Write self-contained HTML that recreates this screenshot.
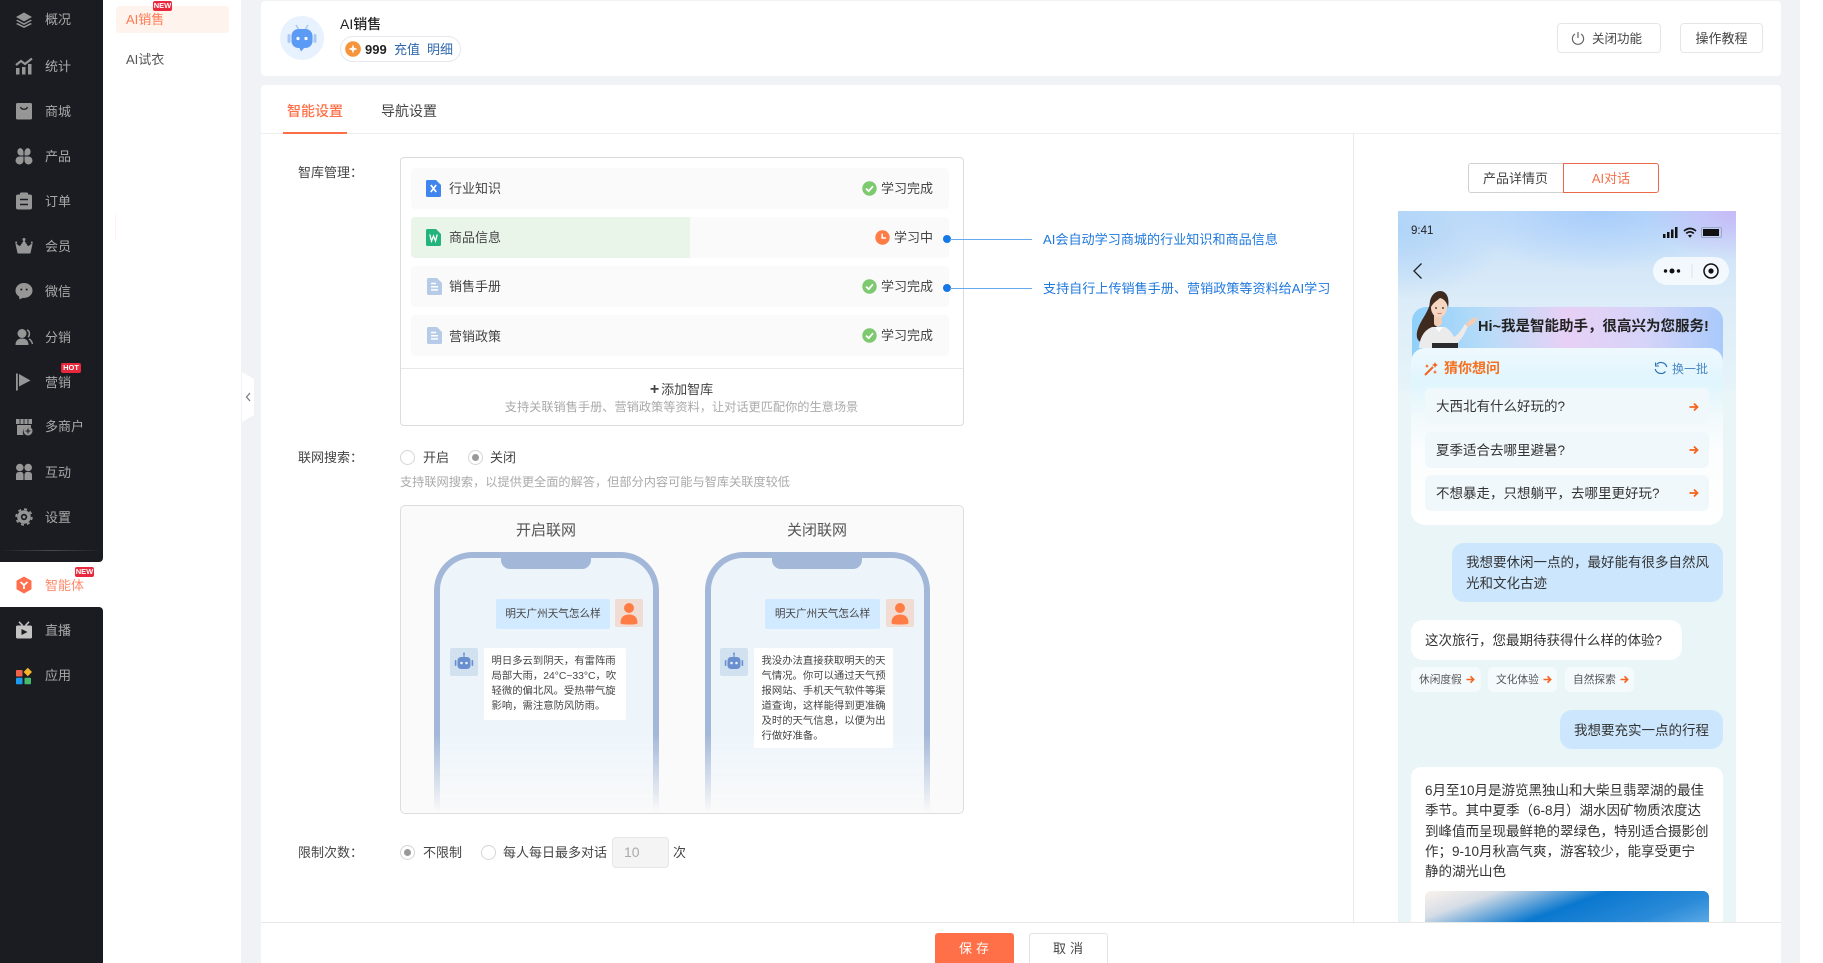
<!DOCTYPE html>
<html lang="zh-CN"><head><meta charset="utf-8"><title>AI销售</title>
<style>
*{box-sizing:border-box;margin:0;padding:0}
html,body{width:1823px;height:963px;overflow:hidden;background:#fff}
body{position:relative;font-family:"Liberation Sans","Noto Sans CJK SC",sans-serif;font-size:13px;color:#333}
.a,.t,svg.a{position:absolute}
.t{white-space:nowrap;line-height:20px;height:20px;margin-top:1px}
.nav{color:#a9a9a9;left:45px}
.ic{position:absolute;left:14.5px;width:18px;height:18px;margin-top:-.5px;fill:#969696}
.badge{position:absolute;background:#e8283c;color:#fff;font-size:7.500px;font-weight:bold;line-height:10px;height:10px;text-align:center;border-radius:2px;font-family:"Liberation Sans",sans-serif}
.row{position:absolute;left:411px;width:538px;height:41px;background:#fafafa;border-radius:4px;overflow:hidden}
.radio{position:absolute;width:15px;height:15px;border:1px solid #d5d5d5;border-radius:50%;background:#fff}
.radio.on:after{content:"";position:absolute;left:3px;top:3px;width:7px;height:7px;border-radius:50%;background:#999}
.phone{position:absolute;top:552px;width:225px;height:260px;border:6px solid #a3b7d8;border-bottom:0;border-radius:38px 38px 0 0;background:#edf5fb;-webkit-mask-image:linear-gradient(to bottom,#000 70%,transparent 100%);mask-image:linear-gradient(to bottom,#000 70%,transparent 100%)}
.notch{position:absolute;top:552px;width:90px;height:17px;background:#a3b7d8;border-radius:0 0 9px 9px}
.q{position:absolute;background:#d2eaff;top:599px;height:30px;line-height:30px;text-align:center;font-size:10.6px;color:#444;border-radius:2px;white-space:nowrap}
.av{position:absolute;top:599px;width:28px;height:28px;background:#f1dcd3;border-radius:2px}
.bot{position:absolute;top:648px;width:28px;height:28px;background:#d2e1f0;border-radius:2px}
.ans{position:absolute;top:648px;background:#fff;border-radius:2px;font-size:10.35px;line-height:15px;color:#444;padding:5.5px 0 0 7.5px;white-space:nowrap}
.qq{position:absolute;left:1425px;width:284px;height:36px;line-height:38px;padding-left:11px;background:#f1f8fb;border-radius:6px;font-size:13.5px;color:#333;white-space:nowrap}
.chip{position:absolute;top:667px;height:25px;line-height:27px;background:#f5fbfd;border-radius:6px;font-size:10.7px;color:#555;padding-left:8px;white-space:nowrap}
.bub{position:absolute;border-radius:12px;font-size:13.5px;color:#333;white-space:nowrap}
.btn{position:absolute;border:1px solid #e6e6e6;border-radius:4px;background:#fff;text-align:center;color:#444;white-space:nowrap}
</style></head><body>
<svg width="0" height="0" style="position:absolute">
<symbol id="ok" viewBox="0 0 15 15"><circle cx="7.5" cy="7.5" r="7.2" fill="#7cc96f"/><path d="M4 7.6 6.7 10.2 11 5.2" fill="none" stroke="#fff" stroke-width="1.8"/></symbol>
<symbol id="doc" viewBox="0 0 15 17"><path d="M1.5 0H10L15 5V15.500A1.500 1.500 0 0 1 13.500 17H1.500A1.500 1.500 0 0 1 0 15.500V1.500A1.500 1.500 0 0 1 1.500 0Z" fill="#b6cbe8"/><path d="M4 5.500H9M4 8.700H11M4 11.900H11" stroke="#fff" stroke-width="1.500"/></symbol>
<symbol id="arr" viewBox="0 0 10 10"><path d="M0.500 5H8M5 1.500 8.500 5 5 8.500" fill="none" stroke="#f5641e" stroke-width="1.800"/></symbol>
<symbol id="robot" viewBox="0 0 28 28"><path d="M14 5.500V9" stroke="#6a8fcf" stroke-width="1.200"/><circle cx="14" cy="5.500" r="1" fill="#6a8fcf"/><rect x="7.500" y="9" width="13" height="12" rx="3.500" fill="#6a8fcf"/><rect x="4.800" y="12" width="1.600" height="6" rx=".8" fill="#6a8fcf"/><rect x="21.600" y="12" width="1.600" height="6" rx=".8" fill="#6a8fcf"/><circle cx="11.500" cy="15" r="1.300" fill="#e6eef8"/><circle cx="16.500" cy="15" r="1.300" fill="#e6eef8"/></symbol>
<symbol id="person" viewBox="0 0 28 28"><circle cx="14" cy="9" r="5" fill="#ff7d45"/><path d="M5.500 24C5.500 18 9 15.500 14 15.500S22.500 18 22.500 24C22.500 25 21 25.500 14 25.500S5.500 25 5.500 24Z" fill="#ff7d45"/></symbol>
</svg>

<!-- main gray bg -->
<div class="a" style="left:241px;top:0;width:1559px;height:963px;background:#f1f2f6"></div>
<!-- primary nav -->
<div class="a" style="left:0;top:0;width:103px;height:562px;background:#1a1c22;border-radius:0 0 4px 0"></div>
<div class="a" style="left:0;top:607px;width:103px;height:356px;background:#1a1c22;border-radius:0 4px 0 0"></div>
<div class="a" style="left:0;top:550px;width:103px;height:1px;background:linear-gradient(90deg,#1a1c22,#4a4a4d 50%,#1a1c22)"></div>
<!-- secondary nav -->
<div class="a" style="left:103px;top:0;width:138px;height:963px;background:#fff"></div>
<div class="a" style="left:115px;top:213px;width:1px;height:27px;background:#fdf3ef"></div>

<svg class="ic" style="top:11px" viewBox="0 0 18 18"><path d="M9 1.500 17 6 9 10.500 1 6Z"/><path d="M2.500 8.700 9 12.300 15.500 8.700 17 9.500 9 14 1 9.500Z"/><path d="M2.500 12 9 15.300 15.500 12 17 13 9 17 1 13Z"/></svg>
<div class="t nav" style="top:9px">概况</div>
<svg class="ic" style="top:57px" viewBox="0 0 18 18"><path d="M1 8 6 4 10 7 17 1.500" fill="none" stroke="#969696" stroke-width="2.200"/><rect x="1" y="11" width="3.500" height="6.500"/><rect x="7" y="10" width="3.500" height="7.500"/><rect x="13" y="7" width="3.500" height="10.500"/></svg>
<div class="t nav" style="top:56px">统计</div>
<svg class="ic" style="top:102px" viewBox="0 0 18 18"><path d="M2.500 1H15.500A1.500 1.500 0 0 1 17 2.500V16A1.500 1.500 0 0 1 15.500 17.500H2.500A1.500 1.500 0 0 1 1 16V2.500A1.500 1.500 0 0 1 2.500 1Z"/><path d="M5.500 5C6.500 8 11.500 8 12.500 5" fill="none" stroke="#1a1c22" stroke-width="1.200"/></svg>
<div class="t nav" style="top:101px">商城</div>
<svg class="ic" style="top:147px" viewBox="0 0 18 18"><path d="M5 1A4 4 0 0 1 8.500 5V8.500H5A4 4 0 0 1 5 1Z"/><path d="M13 1A4 4 0 0 1 13 8.500H9.500V5A4 4 0 0 1 13 1Z"/><path d="M5 9.500H8.500V13A4 4 0 1 1 5 9.500Z"/><path d="M9.500 9.500H13A4 4 0 1 1 9.500 13Z"/></svg>
<div class="t nav" style="top:146px">产品</div>
<svg class="ic" style="top:192px" viewBox="0 0 18 18"><rect x="1" y="2.500" width="16" height="15" rx="2"/><rect x="5" y="0.500" width="8" height="3" rx="1"/><path d="M5 7.500H13M5 12.500H13" stroke="#1a1c22" stroke-width="1.500"/></svg>
<div class="t nav" style="top:191px">订单</div>
<svg class="ic" style="top:237px" viewBox="0 0 18 18"><path d="M1 7 5 10 9 4 13 10 17 7 15 16H3Z" stroke="#969696" stroke-linejoin="round"/><circle cx="9" cy="2.500" r="1.500"/><circle cx="1.200" cy="5.500" r="1"/><circle cx="16.800" cy="5.500" r="1"/></svg>
<div class="t nav" style="top:236px">会员</div>
<svg class="ic" style="top:282px" viewBox="0 0 18 18"><ellipse cx="9" cy="8.500" rx="8.500" ry="7.500"/><path d="M4 13.500 4.500 17.500 8.500 15.500Z"/><circle cx="6.300" cy="7.500" r="1" fill="#1a1c22"/><circle cx="11.700" cy="7.500" r="1" fill="#1a1c22"/></svg>
<div class="t nav" style="top:281px">微信</div>
<svg class="ic" style="top:328px" viewBox="0 0 18 18"><circle cx="7" cy="5.500" r="4.500"/><path d="M0.500 17C0.500 12.500 3 10.500 7 10.500S13.500 12.500 13.500 17Z"/><path d="M12 2C15 3 15 7.500 13 9M14 11C16 12 17 14 17.500 16" fill="none" stroke="#969696" stroke-width="1.500"/></svg>
<div class="t nav" style="top:327px">分销</div>
<svg class="ic" style="top:373px" viewBox="0 0 18 18"><rect x="1" y="0.500" width="1.800" height="17"/><path d="M4 1 15.500 7.500 4 13.500Z"/></svg>
<div class="t nav" style="top:372px">营销</div>
<div class="badge" style="left:61px;top:363px;width:20px">HOT</div>
<svg class="ic" style="top:418px" viewBox="0 0 18 18"><path d="M1 1H17V6H1Z"/><path d="M2 7H16V9.500A5.500 5.500 0 0 0 8.500 17H2Z"/><path d="M5 1V6M9 1V6M13 1V6" stroke="#1a1c22" stroke-width=".8"/><circle cx="13" cy="13" r="4.500"/><path d="M13 10.500V15.500M10.500 13H15.500" stroke="#1a1c22" stroke-width="1.100"/></svg>
<div class="t nav" style="top:416px">多商户</div>
<svg class="ic" style="top:463px" viewBox="0 0 18 18"><circle cx="4.800" cy="4.500" r="3.800"/><circle cx="13.200" cy="4.500" r="3.800"/><path d="M1 17V12Q1 9 4 9H7L8.500 11V17ZM9.500 11 11 9H14Q17 9 17 12V17H9.500Z"/></svg>
<div class="t nav" style="top:462px">互动</div>
<svg class="ic" style="top:508px" viewBox="0 0 18 18"><circle cx="9" cy="9" r="6.800"/><circle cx="9" cy="9" r="7.800" fill="none" stroke="#969696" stroke-width="1.800" stroke-dasharray="3 3.100"/><circle cx="9" cy="9" r="3.200" fill="#1a1c22"/><circle cx="9" cy="9" r="1.500" fill="#969696"/></svg>
<div class="t nav" style="top:507px">设置</div>

<svg class="ic" style="top:576px" viewBox="0 0 18 18"><path d="M9 .5 16.500 4.700V13.300L9 17.500 1.500 13.300V4.700Z" fill="#ff6f4d"/><path d="M5.500 6 9 9 12.500 6M9 9V13" fill="none" stroke="#fff" stroke-width="1.800"/></svg>
<div class="t nav" style="top:575px;color:#ff8a6b">智能体</div>
<div class="badge" style="left:75px;top:567px;width:19px">NEW</div>
<svg class="ic" style="top:621px" viewBox="0 0 18 18"><rect x="1" y="4.500" width="16" height="13" rx="1.500" fill="#c4c4c4"/><path d="M4 .8 7.500 4.500M14 .8 10.500 4.500" stroke="#c4c4c4" stroke-width="1.500"/><path d="M6.500 8 12.500 11 6.500 14Z" fill="#1a1c22"/></svg>
<div class="t nav" style="top:620px">直播</div>
<svg class="ic" style="top:667px" viewBox="0 0 18 18"><rect x="1" y="3" width="6.500" height="6.500" rx=".8" fill="#f0614a"/><path d="M12.800 .8 17 5 12.800 9.200 8.600 5Z" fill="#f9b52a"/><rect x="1" y="10.800" width="6.500" height="6.500" rx=".8" fill="#1b9bf0"/><rect x="9.500" y="10.800" width="6.500" height="6.500" rx=".8" fill="#46bb6c"/></svg>
<div class="t nav" style="top:665px">应用</div>

<!-- sub menu -->
<div class="a" style="left:116px;top:6px;width:113px;height:27px;background:#fff3ee;border-radius:3px"></div>
<div class="t" style="left:126px;top:9px;color:#ff7a50">AI销售</div>
<div class="badge" style="left:153px;top:1px;width:19px">NEW</div>
<div class="t" style="left:126px;top:49px;color:#555">AI试衣</div>
<!-- collapse handle -->
<svg class="a" style="left:242px;top:372px" width="13" height="50" viewBox="0 0 13 50"><path d="M0 0 12 7V43L0 50Z" fill="#fff"/><path d="M8 21 4.500 25 8 29" fill="none" stroke="#777" stroke-width="1.200"/></svg>

<!-- header card -->
<div class="a" style="left:261px;top:1px;width:1520px;height:75px;background:#fff;border-radius:4px"></div>
<svg class="a" style="left:280px;top:16px" width="44" height="44" viewBox="0 0 44 44"><circle cx="22" cy="22" r="22" fill="#e8f2fe"/><path d="M16 9 18.500 13M28 9 25.500 13" stroke="#a9c8f5" stroke-width="1.500"/><rect x="7.500" y="18" width="3" height="9" rx="1.500" fill="#a9c8f5"/><rect x="33.500" y="18" width="3" height="9" rx="1.500" fill="#a9c8f5"/><rect x="11.500" y="13" width="21" height="19" rx="7" fill="#5b9bf5"/><path d="M19 31 21 35.500 25 31Z" fill="#5b9bf5"/><circle cx="18" cy="22.500" r="1.600" fill="#fff"/><circle cx="26" cy="22.500" r="1.600" fill="#fff"/></svg>
<div class="t" style="left:340px;top:13px;font-size:14px;font-weight:500;color:#222">AI销售</div>
<div class="a" style="left:340px;top:36px;width:121px;height:26px;border:1px solid #e6e8ee;border-radius:13px;background:#fff"></div>
<svg class="a" style="left:345px;top:41px" width="16" height="16" viewBox="0 0 16 16"><circle cx="8" cy="8" r="7.800" fill="#f5943a"/><path d="M8 3.500 9.200 6.800 12.500 8 9.200 9.200 8 12.500 6.800 9.200 3.500 8 6.800 6.800Z" fill="#fff"/></svg>
<div class="t" style="left:365px;top:39px;font-weight:bold;color:#222">999</div>
<div class="t" style="left:394px;top:39px;color:#2f67ad">充值</div>
<div class="t" style="left:427px;top:39px;color:#2f67ad">明细</div>
<div class="btn" style="left:1557px;top:23px;width:104px;height:30px;line-height:30px;padding-left:16px;font-size:12.500px;border-width:1.500px">关闭功能</div>
<svg class="a" style="left:1571px;top:31px" width="14" height="15" viewBox="0 0 14 15"><path d="M7 1V7" stroke="#666" stroke-width="1.200"/><path d="M4 3A5.600 5.600 0 1 0 10 3" fill="none" stroke="#666" stroke-width="1.200"/></svg>
<div class="btn" style="left:1680px;top:23px;width:83px;height:30px;line-height:30px;font-size:13px;border-width:1.500px">操作教程</div>

<!-- content card -->
<div class="a" style="left:261px;top:85px;width:1520px;height:878px;background:#fff;border-radius:4px 4px 0 0"></div>
<div class="a" style="left:261px;top:133px;width:1520px;height:1px;background:#eee"></div>
<div class="t" style="left:287px;top:100px;font-size:14px;color:#ff7048;font-weight:500">智能设置</div>
<div class="a" style="left:283px;top:132px;width:64px;height:2px;background:#ff7048"></div>
<div class="t" style="left:381px;top:100px;font-size:14px;color:#444">导航设置</div>
<div class="a" style="left:1353px;top:134px;width:1px;height:788px;background:#eaeaea"></div>

<!-- 智库 -->
<div class="t" style="left:298px;top:162px;color:#444">智库管理：</div>
<div class="a" style="left:400px;top:157px;width:564px;height:269px;border:1px solid #dcdcdc;border-radius:4px;background:#fff"></div>
<div class="row" style="top:168px"></div>
<div class="row" style="top:217px"><div class="a" style="left:0;top:0;width:279px;height:41px;background:#eaf5ea"></div></div>
<div class="row" style="top:266px"></div>
<div class="row" style="top:315px"></div>

<svg class="a" style="left:426px;top:180px" width="15" height="17" viewBox="0 0 15 17"><path d="M1.500 0H10L15 5V15.500A1.500 1.500 0 0 1 13.500 17H1.500A1.500 1.500 0 0 1 0 15.500V1.500A1.500 1.500 0 0 1 1.500 0Z" fill="#3f84ef"/><path d="M4.800 5 10.200 12M10.200 5 4.800 12" stroke="#fff" stroke-width="1.700"/></svg>
<div class="t" style="left:449px;top:178px;color:#444">行业知识</div>
<svg class="a" style="left:862px;top:181px" width="15" height="15"><use href="#ok"/></svg>
<div class="t" style="left:881px;top:178px;color:#444">学习完成</div>

<svg class="a" style="left:426px;top:229px" width="15" height="17" viewBox="0 0 15 17"><path d="M1.500 0H10L15 5V15.500A1.500 1.500 0 0 1 13.500 17H1.500A1.500 1.500 0 0 1 0 15.500V1.500A1.500 1.500 0 0 1 1.500 0Z" fill="#23b47e"/><path d="M3.800 5.500 5.500 12 7.500 7 9.500 12 11.200 5.500" fill="none" stroke="#fff" stroke-width="1.300"/></svg>
<div class="t" style="left:449px;top:227px;color:#444">商品信息</div>
<svg class="a" style="left:875px;top:230px" width="15" height="15" viewBox="0 0 15 15"><circle cx="7.500" cy="7.500" r="7.200" fill="#ff7d45"/><path d="M7.200 3.800V8H11" fill="none" stroke="#fff" stroke-width="1.600"/></svg>
<div class="t" style="left:894px;top:227px;color:#444">学习中</div>
<div class="a" style="left:943px;top:235px;width:8px;height:8px;border-radius:50%;background:#1677e6"></div>
<div class="a" style="left:950px;top:238.500px;width:82px;height:1px;background:#68a8ec"></div>

<svg class="a" style="left:427px;top:278px" width="15" height="17"><use href="#doc"/></svg>
<div class="t" style="left:449px;top:276px;color:#444">销售手册</div>
<svg class="a" style="left:862px;top:279px" width="15" height="15"><use href="#ok"/></svg>
<div class="t" style="left:881px;top:276px;color:#444">学习完成</div>
<div class="a" style="left:943px;top:284px;width:8px;height:8px;border-radius:50%;background:#1677e6"></div>
<div class="a" style="left:950px;top:287.500px;width:82px;height:1px;background:#68a8ec"></div>

<svg class="a" style="left:427px;top:327px" width="15" height="17"><use href="#doc"/></svg>
<div class="t" style="left:449px;top:326px;color:#444">营销政策</div>
<svg class="a" style="left:862px;top:328px" width="15" height="15"><use href="#ok"/></svg>
<div class="t" style="left:881px;top:325px;color:#444">学习完成</div>

<div class="a" style="left:401px;top:368px;width:562px;height:1px;background:#e8e8e8"></div>
<div class="t" style="left:400px;width:563px;text-align:center;top:379px;color:#444"><span style="font-size:16px;margin-right:2px;font-weight:bold">+</span>添加智库</div>
<div class="t" style="left:400px;width:563px;text-align:center;top:396px;font-size:12.200px;color:#aaa">支持关联销售手册、营销政策等资料，让对话更匹配你的生意场景</div>

<div class="t" style="left:1043px;top:229px;color:#1f78dc;font-size:13.100px">AI会自动学习商城的行业知识和商品信息</div>
<div class="t" style="left:1043px;top:278px;color:#1f78dc;font-size:13.100px">支持自行上传销售手册、营销政策等资料给AI学习</div>

<!-- 联网 -->
<div class="t" style="left:298px;top:447px;color:#444">联网搜索：</div>
<div class="radio" style="left:400px;top:450px"></div>
<div class="t" style="left:423px;top:447px;color:#444">开启</div>
<div class="radio on" style="left:467.500px;top:450px"></div>
<div class="t" style="left:490px;top:447px;color:#444">关闭</div>
<div class="t" style="left:400px;top:471px;font-size:12.200px;color:#aaa">支持联网搜索，以提供更全面的解答，但部分内容可能与智库关联度较低</div>

<div class="a" style="left:400px;top:505px;width:564px;height:309px;background:#fafafa;border:1px solid #dedede;border-radius:5px"></div>
<div class="t" style="left:516px;top:520px;font-size:15px;color:#555">开启联网</div>
<div class="t" style="left:787px;top:520px;font-size:15px;color:#555">关闭联网</div>

<div class="phone" style="left:434px"></div>
<div class="notch" style="left:501px"></div>
<div class="q" style="left:496px;width:114px">明天广州天气怎么样</div>
<div class="av" style="left:615px"><svg width="28" height="28"><use href="#person"/></svg></div>
<div class="bot" style="left:450px"><svg width="28" height="28"><use href="#robot"/></svg></div>
<div class="ans" style="left:484px;width:142px;height:72px">明日多云到阴天，有雷阵雨<br>局部大雨，24°C~33°C，吹<br>轻微的偏北风。受热带气旋<br>影响，需注意防风防雨。</div>

<div class="phone" style="left:705px"></div>
<div class="notch" style="left:772px"></div>
<div class="q" style="left:765px;width:115px">明天广州天气怎么样</div>
<div class="av" style="left:886px"><svg width="28" height="28"><use href="#person"/></svg></div>
<div class="bot" style="left:720px"><svg width="28" height="28"><use href="#robot"/></svg></div>
<div class="ans" style="left:754px;width:139px;height:100px">我没办法直接获取明天的天<br>气情况。你可以通过天气预<br>报网站、手机天气软件等渠<br>道查询，这样能得到更准确<br>及时的天气信息，以便为出<br>行做好准备。</div>

<!-- 限制 -->
<div class="t" style="left:298px;top:842px;color:#444">限制次数：</div>
<div class="radio on" style="left:400px;top:845px"></div>
<div class="t" style="left:423px;top:842px;color:#444">不限制</div>
<div class="radio" style="left:481px;top:845px"></div>
<div class="t" style="left:503px;top:842px;color:#444">每人每日最多对话</div>
<div class="a" style="left:612px;top:837px;width:57px;height:31px;background:#f4f4f4;border:1px solid #e6e6e6;border-radius:4px;line-height:29px;padding-left:11px;color:#aaa;font-size:14px">10</div>
<div class="t" style="left:673px;top:842px;color:#444">次</div>

<!-- footer -->
<div class="a" style="left:261px;top:922px;width:1520px;height:1px;background:#e8e8e8"></div>
<div class="a" style="left:935px;top:933px;width:79px;height:30px;background:#ff7048;border-radius:3px 3px 0 0;color:#fff;text-align:center;line-height:31px;letter-spacing:4px;padding-left:3px">保存</div>
<div class="a" style="left:1029px;top:933px;width:79px;height:30px;background:#fff;border:1px solid #e2e2e2;border-bottom:0;border-radius:3px 3px 0 0;color:#444;text-align:center;line-height:29px;letter-spacing:4px;padding-left:3px">取消</div>

<!-- preview toggle -->
<div class="a" style="left:1468px;top:163px;width:96px;height:30px;border:1px solid #d0d0d0;border-right:0;border-radius:3px 0 0 3px;line-height:30px;text-align:center;color:#444;padding-right:2px">产品详情页</div>
<div class="a" style="left:1563px;top:163px;width:96px;height:30px;border:1px solid #e8694a;border-radius:0 3px 3px 0;line-height:30px;text-align:center;color:#f0704c;background:#fff">AI对话</div>

<!-- phone preview -->
<div class="a" style="left:1398px;top:211px;width:338px;height:711px;overflow:hidden;background:#eaf5f8">
 <div class="a" style="left:0;top:0;width:338px;height:180px;background:radial-gradient(90px 50px at 100% 0,#c7b9f7 0,rgba(199,185,247,0) 100%),radial-gradient(150px 60px at 60% 0,#a8cdfb 0,rgba(168,205,251,0) 100%),radial-gradient(110px 70px at 0 10%,#b0d4f8 0,rgba(176,212,248,0) 100%),linear-gradient(180deg,#c4def9 0,#dcecf8 50%,#e6f4f9 100%)"></div>
</div>
<div class="t" style="left:1411px;top:220px;font-size:11.500px;color:#222">9:41</div>
<svg class="a" style="left:1663px;top:226px" width="60" height="13" viewBox="0 0 60 13"><rect x="0" y="8" width="2.500" height="4" fill="#111"/><rect x="4" y="6" width="2.500" height="6" fill="#111"/><rect x="8" y="3.500" width="2.500" height="8.500" fill="#111"/><rect x="12" y="1" width="2.500" height="11" fill="#111"/><path d="M21 5Q27 0 33 5M23.200 7.500Q27 4.200 30.800 7.500" fill="none" stroke="#111" stroke-width="1.600"/><path d="M25 9.500 27 11.800 29 9.500Q27 8 25 9.500Z" fill="#111"/><rect x="38.500" y="1.500" width="20" height="10" rx="1.500" fill="none" stroke="#8da0b8" stroke-width=".8"/><rect x="40" y="3" width="16" height="7" fill="#111"/></svg>
<svg class="a" style="left:1412px;top:262px" width="12" height="18" viewBox="0 0 12 18"><path d="M9.500 1.500 2 9 9.500 16.500" fill="none" stroke="#222" stroke-width="1.300"/></svg>
<div class="a" style="left:1653px;top:257px;width:76px;height:28px;border-radius:14px;background:rgba(255,255,255,.72)"></div>
<svg class="a" style="left:1663px;top:262px" width="62" height="18" viewBox="0 0 62 18"><circle cx="2.500" cy="9" r="1.700" fill="#111"/><circle cx="9" cy="9" r="2.500" fill="#111"/><circle cx="15.500" cy="9" r="1.700" fill="#111"/><path d="M29 2V16" stroke="#d8dde4" stroke-width=".8"/><circle cx="48" cy="9" r="7" fill="none" stroke="#111" stroke-width="1.500"/><circle cx="48" cy="9" r="2.600" fill="#111"/></svg>

<!-- hi banner -->
<div class="a" style="left:1412px;top:307px;width:311px;height:60px;border-radius:14px 14px 0 0;background:linear-gradient(90deg,#8fd0fb 0,#b9dcf8 25%,#e8d0f5 50%,#d5d4f8 75%,#a9c9fb 100%)"></div>
<svg class="a" style="left:1412px;top:290px" width="66" height="60" viewBox="0 0 66 60">
 <path d="M19 10C16 24 8 30 5 42 4 48 6 52 10 52L24 40 30 14Z" fill="#3f2a20"/>
 <path d="M7 58C8 46 13 40 20 37L33 37C37 39 40 43 42 47 46 45 50 39 53 34L56 36C53 43 49 51 44 54L47 58Z" fill="#ecebec"/>
 <path d="M53 35 59 29 66 27 63 33 56 37Z" fill="#f3cdb6"/>
 <rect x="20" y="53" width="26" height="5" fill="#2c2c2e"/>
 <path d="M22 24V33C22 37 28 38 30 33V24Z" fill="#f1cdb8"/>
 <ellipse cx="27" cy="17.500" rx="8" ry="10" fill="#f5d6c3"/>
 <path d="M18 19C16 7 23 1 28 1 34 1 38 7 36 18 35 12 32 9 28 8 25 11 21 12 18 19Z" fill="#3f2a20"/>
 <circle cx="24" cy="18" r=".9" fill="#2a1c16"/><circle cx="31" cy="18" r=".9" fill="#2a1c16"/>
 <path d="M25.500 23Q27.500 24.500 29.500 23" stroke="#c86a5a" stroke-width=".8" fill="none"/>
 <path d="M23 37 27 42 31 37Z" fill="#fff"/>
</svg>
<div class="t" style="left:1478px;top:316px;font-size:14.500px;font-weight:bold;color:#222">Hi~我是智能助手，很高兴为您服务!</div>

<!-- guess card -->
<div class="a" style="left:1411px;top:348px;width:312px;height:177px;border-radius:14px;background:linear-gradient(180deg,#eef9fe 0,#e0f5fd 20%,#f0f9fc 38%,#fbfdfe 58%,#ffffff 100%)"></div>
<svg class="a" style="left:1424px;top:361px" width="15" height="15" viewBox="0 0 15 15"><path d="M1 14 9 6" stroke="#f5641e" stroke-width="2"/><path d="M11 1 12 3 14 4 12 5 11 7 10 5 8 4 10 3ZM3 3 3.700 4.500 5 5 3.700 5.700 3 7 2.300 5.700 1 5 2.300 4.500ZM11 9 11.700 10.500 13 11 11.700 11.700 11 13 10.300 11.700 9 11 10.300 10.500Z" fill="#f5641e"/></svg>
<div class="t" style="left:1444px;top:357px;font-size:14px;font-weight:bold;color:#f5701f">猜你想问</div>
<svg class="a" style="left:1654px;top:361px" width="14" height="14" viewBox="0 0 14 14"><path d="M2.500 3.500A6 6 0 0 1 12.800 6M11.500 10.500A6 6 0 0 1 1.200 8" fill="none" stroke="#2a6fb5" stroke-width="1.200"/><path d="M1.500 1.500V5H5" fill="none" stroke="#2a6fb5" stroke-width="1"/></svg>
<div class="t" style="left:1672px;top:358px;font-size:12px;color:#4a88c7">换一批</div>
<div class="qq" style="top:388px">大西北有什么好玩的?</div>
<div class="qq" style="top:432px">夏季适合去哪里避暑?</div>
<div class="qq" style="top:475px">不想暴走，只想躺平，去哪里更好玩?</div>
<svg class="a" style="left:1689px;top:402px" width="10" height="10"><use href="#arr"/></svg>
<svg class="a" style="left:1689px;top:445px" width="10" height="10"><use href="#arr"/></svg>
<svg class="a" style="left:1689px;top:488px" width="10" height="10"><use href="#arr"/></svg>

<!-- chat -->
<div class="bub" style="left:1452px;top:543px;width:271px;height:59px;background:#cce7fd;padding:10px 0 0 14px;line-height:20.500px">我想要休闲一点的，最好能有很多自然风<br>光和文化古迹</div>
<div class="bub" style="left:1411px;top:620px;width:271px;height:40px;background:#fff;padding-left:14px;line-height:42px">这次旅行，您最期待获得什么样的体验?</div>
<div class="chip" style="left:1411px;width:70px">休闲度假</div>
<div class="chip" style="left:1488px;width:69px">文化体验</div>
<div class="chip" style="left:1565px;width:69px">自然探索</div>
<svg class="a" style="left:1466px;top:675px" width="9" height="9"><use href="#arr"/></svg>
<svg class="a" style="left:1543px;top:675px" width="9" height="9"><use href="#arr"/></svg>
<svg class="a" style="left:1620px;top:675px" width="9" height="9"><use href="#arr"/></svg>
<div class="bub" style="left:1560px;top:710px;width:163px;height:39px;background:#cce7fd;padding-left:14px;line-height:41px">我想要充实一点的行程</div>
<div class="a" style="left:1411px;top:767px;width:312px;height:155px;background:#fff;border-radius:10px 10px 0 0"></div>
<div class="t" style="left:1425px;top:780px;font-size:13.500px;line-height:20.300px;height:102px">6月至10月是游览黑独山和大柴旦翡翠湖的最佳<br>季节。其中夏季（6-8月）湖水因矿物质浓度达<br>到峰值而呈现最鲜艳的翠绿色，特别适合摄影创<br>作；9-10月秋高气爽，游客较少，能享受更宁<br>静的湖光山色</div>
<div class="a" style="left:1425px;top:891px;width:284px;height:31px;border-radius:6px 6px 0 0;background:linear-gradient(160deg,#fbf3ec 0,#d6dde6 20%,#0a78cf 50%,#2a8ad8 80%,#5aa8e4 100%)"></div>
</body></html>
